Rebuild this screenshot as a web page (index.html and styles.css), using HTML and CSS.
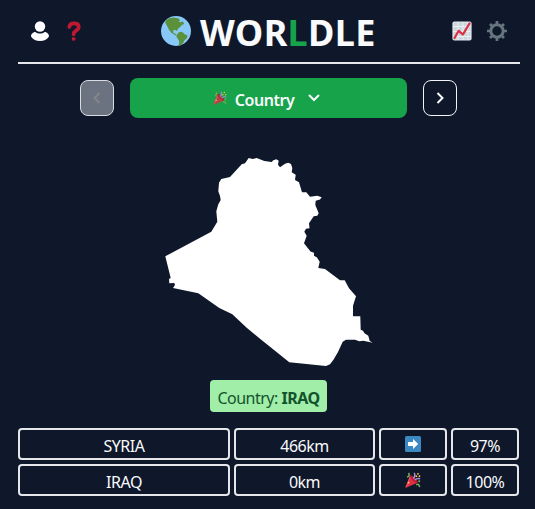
FILE: index.html
```html
<!DOCTYPE html>
<html lang="en">
<head>
<meta charset="utf-8">
<title>Worldle</title>
<link rel="stylesheet" href="styles.css">
</head>
<body>
<svg width="0" height="0" class="defs" aria-hidden="true">
  <symbol id="popper" viewBox="0 0 36 36">
    <path fill="#dd2e44" d="M11.6 7.6 1 32.5c-.8 2 .5 3.300 2.500 2.500L28.400 24.400z"/>
    <path fill="#ea596e" d="M13 12 4 34l-2 .8L11.300 9z"/>
    <ellipse cx="20" cy="16" rx="3.500" ry="11.500" transform="rotate(-45 20 16)" fill="#be1931"/>
    <path fill="none" stroke="#aa8dd8" stroke-width="3.400" d="M18.600 14.500q6-6 2-12.500"/>
    <path fill="none" stroke="#77b255" stroke-width="3.400" d="M5 12q7-4 3-10M25 29q6-5 8 5"/>
    <path fill="none" stroke="#aa8dd8" stroke-width="3.400" d="M22 18q5-5 12-3"/>
    <g fill="#ffcc4d"><circle cx="25.500" cy="9.500" r="2"/><circle cx="32.500" cy="9.500" r="2"/><circle cx="29" cy="4" r="2"/><circle cx="8" cy="24" r="2"/></g>
    <circle cx="32" cy="21" r="2.300" fill="#77b255"/>
  </symbol>
</svg>
<main class="game">
  <header class="header">
    <div class="tools">
      <svg width="20" height="22" viewBox="0 0 20 22" fill="#fff"><circle cx="10" cy="6.500" r="5.200"/><path d="M1 16.500c0-3 2.500-4.500 4.300-4.500 1.500 1.100 3 1.500 4.700 1.500s3.200-.4 4.700-1.500c1.800 0 4.300 1.500 4.300 4.500-2 3-5 4.600-9 4.600s-7-1.600-9-4.600z"/></svg>
      <svg width="14" height="20" viewBox="0 0 14 20"><path d="M2.300 6C2.600 3.300 4.400 2.400 7 2.400c3 0 4.700 1.400 4.700 3.600 0 4-5.100 3.300-5.100 7.200" fill="none" stroke="#be1931" stroke-width="3.700" stroke-linecap="round"/><circle cx="6.600" cy="17.900" r="1.900" fill="#be1931"/></svg>
    </div>
    <h1 class="title">
      <svg width="30" height="30" viewBox="0 0 30 30"><circle cx="15" cy="15" r="15" fill="#88c9f9"/><path fill="#5c913b" d="M4.500 5 8 2.300l5-.9 4.600 1 1.600 2-1.800 1.200 2.200.7 2.200-1 1.500 2.800-2.500.9-1.300 1.700-2.300 1.800-1.300 2.600-2-1.300-2 1 .9 2.600 1.900.4 1.500 1.800-2-.4-3.500-2.300L8 13.800 5.700 9.300 4.400 7zM17 16.700l2.500-.9 2.600.7 1.500 1.700 3 1.300-1 3-2 1.500-1.100 2.500-2.800 3-1.800.2.300-4.700-2.800-4.200z"/></svg>
      <span class="wordmark">WOR<span class="accent">L</span>DLE</span>
    </h1>
    <div class="tools tools-right">
      <svg width="20" height="20" viewBox="0 0 20 20"><rect x=".4" y=".4" width="19.200" height="19.200" rx="2" fill="#e1e8ed"/><rect x="1.500" y="1.500" width="17" height="17" fill="#ccd6dd"/><path d="M1 5.500h18M1 10.500h18M1 15.500h18M6 1v18M11 1v18M16 1v18" stroke="#e9eff3" stroke-width="1"/><path d="m2.500 17 4.200-7.200 4.200 3.700L17.500 2.500" fill="none" stroke="#dd2e44" stroke-width="2.200" stroke-linecap="round" stroke-linejoin="round"/></svg>
      <svg width="20" height="20" viewBox="0 0 20 20" fill="none" stroke="#66757f"><circle cx="10" cy="10" r="6.200" stroke-width="3"/><path stroke-width="2.700" d="M10 0v3M10 17v3M0 10h3M17 10h3M3 3l2 2M15 15l2 2M17 3l-2 2M5 15l-2 2"/></svg>
    </div>
  </header>

  <nav class="rounds">
    <button class="step step-off" aria-label="Previous"><svg width="8" height="12" viewBox="0 0 8 12"><path d="M6.500 1 1.500 6l5 5"/></svg></button>
    <button class="picker">
      <svg class="picker-icon" width="14" height="14"><use href="#popper"/></svg>
      <span class="picker-label">Country</span>
      <svg class="chevron" width="12" height="8" viewBox="0 0 12 8"><path d="m1 1 5 5 5-5"/></svg>
    </button>
    <button class="step" aria-label="Next"><svg width="8" height="12" viewBox="0 0 8 12"><path d="m1.500 1 5 5-5 5"/></svg></button>
  </nav>

  <svg class="shape" width="210" height="210" viewBox="164 157 210 210"><path fill="#fff" d="M165.300 256.300 211.300 231.700 217.300 221.700 216.300 211.300 218.300 204.300 220.700 200 220 196 218.300 191.300 219 182.700 221.300 179 230 177 241.700 164.300 245 163.300 248.700 158 252.700 159 256.700 158 264.300 161 271.700 162 273.300 160.300 276.300 159.300 278.700 160.700 278 164.700 280 167.300 285 163.700 288.300 162.700 291 164 292.300 168 291.700 172.300 295.700 174.700 295 180 299 182.300 302 192.300 306.300 192.300 310 196.700 317.300 195.700 321.700 197.300 320 199.500 315.700 200.700 315.300 205 318.700 213.300 317.300 215.700 313.700 216.300 309 223.300 309.500 228.300 306 228.700 304.300 231.700 306.700 235.700 304 243.300 310.500 251.500 314 252.700 314 255.700 317 257.500 319.700 261.700 318.300 268 325 269 340 280.300 344.700 280.300 349 288.300 356 296.300 353 305.700 353 316.300 360.300 316.300 360.700 329.700 363 330.700 364.500 333.300 368.300 335.700 369.700 341 372.700 342.700 363.300 340.700 359.300 341.300 355 339.700 346 339.700 342.700 341.700 338 352 333.300 360 330 364.300 326 366 289.300 362.300 260 338.700 247 328 232.300 314.300 219.300 308 198.300 293.300 173 288 175 285 174.300 283 169.300 283.300 169 279 170.700 278Z"/></svg>

  <p class="answer">Country: <b>IRAQ</b></p>

  <section class="guesses">
    <div class="cell">SYRIA</div><div class="cell">466km</div>
    <div class="cell"><svg width="16" height="16" viewBox="0 0 16 16"><rect width="16" height="16" rx="1.500" fill="#3b88c3"/><path fill="#fff" d="M3 6h5V3l5.200 5L8 13v-3H3z"/></svg></div>
    <div class="cell">97%</div>
    <div class="cell">IRAQ</div><div class="cell">0km</div>
    <div class="cell"><svg width="16" height="16"><use href="#popper"/></svg></div>
    <div class="cell">100%</div>
  </section>
</main>
</body>
</html>
```
FILE: styles.css
```css
* { box-sizing: border-box; }
body {
  margin: 0;
  background: #0f172a;
  color: #f8fafc;
  font: 16px/24px "Noto Sans", "Open Sans", sans-serif;
  overflow: hidden;
}
svg { display: block; flex: none; }
.defs { position: absolute; }
.game {
  width: 502px;
  margin-left: 18px;
  display: flex;
  flex-direction: column;
  align-items: center;
}
.header {
  width: 100%;
  height: 64px;
  border-bottom: 2px solid #e5e7eb;
  display: flex;
  align-items: center;
  justify-content: space-between;
  padding: 0 12px;
}
.tools { display: flex; align-items: center; gap: 17px; width: 56px; }
.tools-right { gap: 15px; }
.title {
  margin: 0;
  display: flex;
  align-items: center;
  gap: 9px;
  font-size: 36px;
  line-height: 40px;
  font-weight: 700;
}
.wordmark { width: 177px; white-space: nowrap; padding-top: 3px; letter-spacing: .35px; }
.accent { color: #16a34a; }
.rounds { display: flex; align-items: center; gap: 16px; margin: 14px 0 0 -1px; }
button { font: inherit; color: inherit; padding: 0; border: 0; }
.step {
  width: 34px;
  height: 36px;
  border: 1px solid #f1f5f9;
  border-radius: 8px;
  background: none;
  display: flex;
  align-items: center;
  justify-content: center;
}
.step path, .chevron path { fill: none; stroke: currentColor; stroke-width: 2; }
.step-off { background: #6b7280; border-color: #d9dce1; }
.step-off path { stroke: #85868a; }
.picker {
  width: 277px;
  height: 40px;
  border-radius: 8px;
  background: #16a34a;
  font-weight: 600;
  display: flex;
  align-items: center;
  justify-content: center;
  padding-right: 4px;
}
.picker-icon { margin-right: 8px; opacity: .85; }
.picker-label { margin-right: 14px; padding-top: 3px; letter-spacing: -.45px; }
.shape { margin-top: 39px; }
.answer {
  margin: 13px 1px 0 0;
  width: 117px;
  height: 32px;
  padding-top: 6px;
  border-radius: 4px;
  background: #a0eea7;
  color: #14532d;
  text-align: center;
  white-space: nowrap;
  letter-spacing: -.5px;
}
.guesses {
  margin-top: 16px;
  width: 502px;
  display: grid;
  grid-template-columns: 212px 141px 68px 68px;
  grid-auto-rows: 32px;
  gap: 4px;
}
.cell {
  border: 2px solid #e5e7eb;
  border-radius: 4px;
  display: flex;
  align-items: center;
  justify-content: center;
  padding-top: 4px;
  letter-spacing: -.5px;
}
.cell svg { margin-top: -4px; }
```
